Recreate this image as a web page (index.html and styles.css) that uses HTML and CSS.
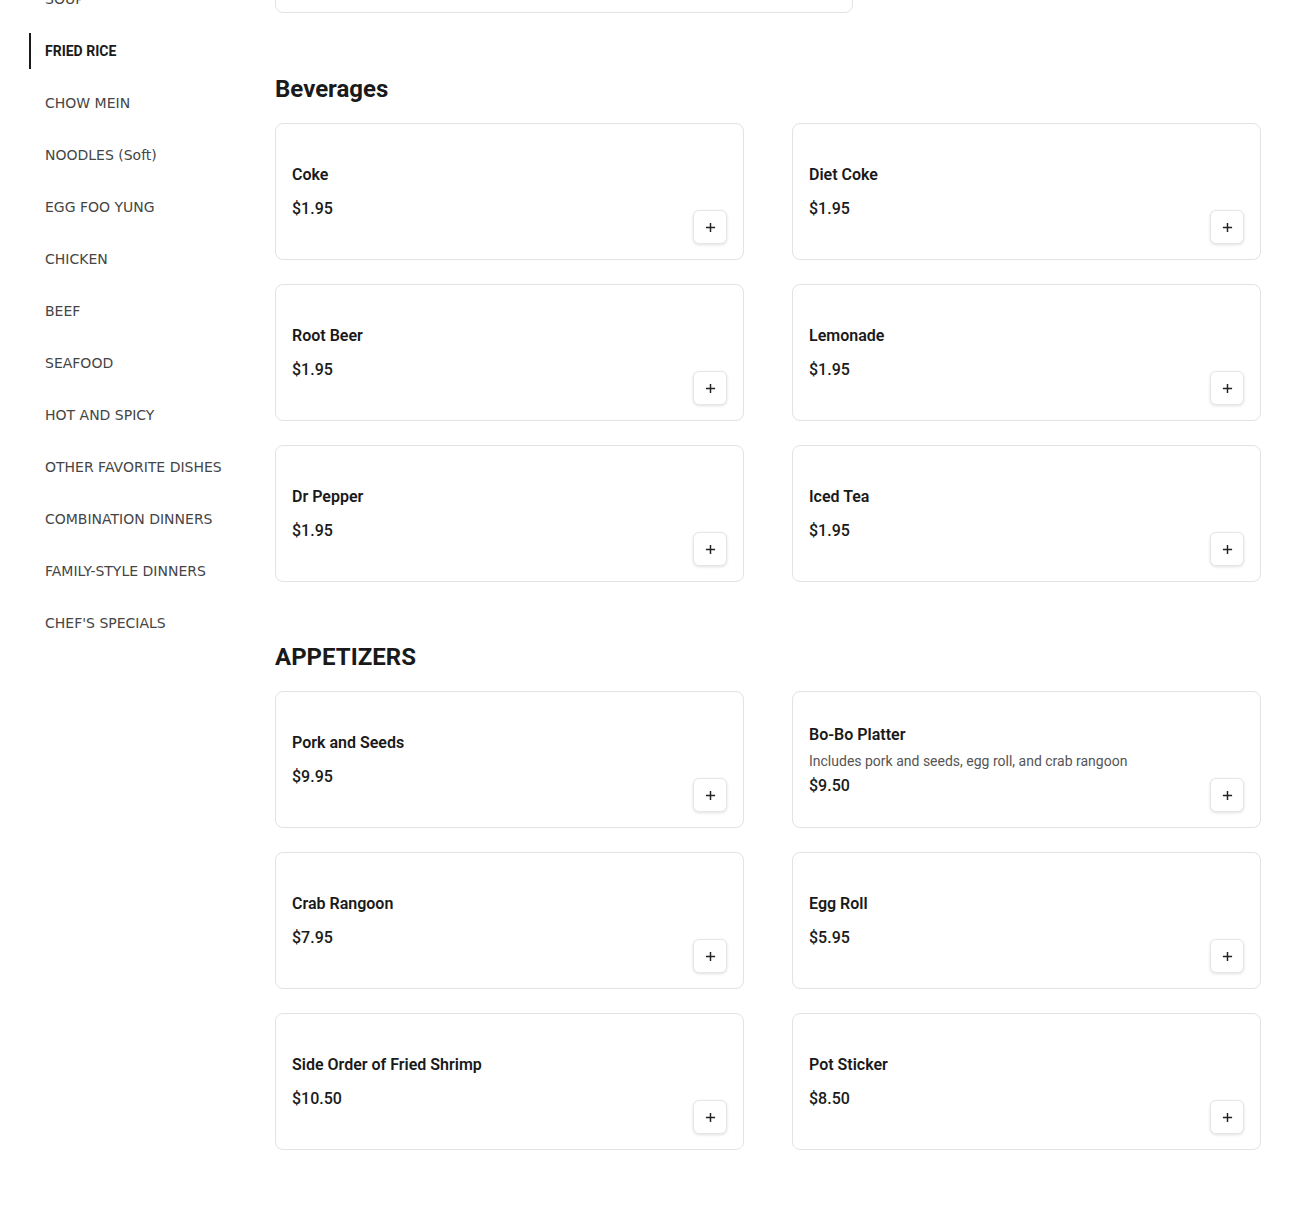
FILE: index.html
```html
<!DOCTYPE html>
<html lang="en">
<head>
<meta charset="utf-8">
<title>Menu</title>
<link rel="stylesheet" href="styles.css">
</head>
<body>
<div class="page">
  <aside class="sidebar">
    <nav class="nav">
      <a class="nav-item">SOUP</a>
      <a class="nav-item active">FRIED RICE</a>
      <a class="nav-item">CHOW MEIN</a>
      <a class="nav-item">NOODLES (Soft)</a>
      <a class="nav-item">EGG FOO YUNG</a>
      <a class="nav-item">CHICKEN</a>
      <a class="nav-item">BEEF</a>
      <a class="nav-item">SEAFOOD</a>
      <a class="nav-item">HOT AND SPICY</a>
      <a class="nav-item">OTHER FAVORITE DISHES</a>
      <a class="nav-item">COMBINATION DINNERS</a>
      <a class="nav-item">FAMILY-STYLE DINNERS</a>
      <a class="nav-item">CHEF'S SPECIALS</a>
    </nav>
  </aside>
  <main class="main">
    <div class="prev-card"></div>

    <section class="section">
      <h2 class="section-title">Beverages</h2>
      <div class="grid">
        <div class="card"><div class="card-body"><div class="item-name">Coke</div><div class="item-price">$1.95</div></div><button class="add-btn"><svg viewBox="0 0 12 12" width="11" height="11"><path d="M6 1v10M1 6h10" stroke="#222" stroke-width="1.6" fill="none"/></svg></button></div>
        <div class="card"><div class="card-body"><div class="item-name">Diet Coke</div><div class="item-price">$1.95</div></div><button class="add-btn"><svg viewBox="0 0 12 12" width="11" height="11"><path d="M6 1v10M1 6h10" stroke="#222" stroke-width="1.6" fill="none"/></svg></button></div>
        <div class="card"><div class="card-body"><div class="item-name">Root Beer</div><div class="item-price">$1.95</div></div><button class="add-btn"><svg viewBox="0 0 12 12" width="11" height="11"><path d="M6 1v10M1 6h10" stroke="#222" stroke-width="1.6" fill="none"/></svg></button></div>
        <div class="card"><div class="card-body"><div class="item-name">Lemonade</div><div class="item-price">$1.95</div></div><button class="add-btn"><svg viewBox="0 0 12 12" width="11" height="11"><path d="M6 1v10M1 6h10" stroke="#222" stroke-width="1.6" fill="none"/></svg></button></div>
        <div class="card"><div class="card-body"><div class="item-name">Dr Pepper</div><div class="item-price">$1.95</div></div><button class="add-btn"><svg viewBox="0 0 12 12" width="11" height="11"><path d="M6 1v10M1 6h10" stroke="#222" stroke-width="1.6" fill="none"/></svg></button></div>
        <div class="card"><div class="card-body"><div class="item-name">Iced Tea</div><div class="item-price">$1.95</div></div><button class="add-btn"><svg viewBox="0 0 12 12" width="11" height="11"><path d="M6 1v10M1 6h10" stroke="#222" stroke-width="1.6" fill="none"/></svg></button></div>
      </div>
    </section>

    <section class="section">
      <h2 class="section-title">APPETIZERS</h2>
      <div class="grid">
        <div class="card"><div class="card-body"><div class="item-name">Pork and Seeds</div><div class="item-price">$9.95</div></div><button class="add-btn"><svg viewBox="0 0 12 12" width="11" height="11"><path d="M6 1v10M1 6h10" stroke="#222" stroke-width="1.6" fill="none"/></svg></button></div>
        <div class="card"><div class="card-body with-desc"><div class="item-name">Bo-Bo Platter</div><div class="item-desc">Includes pork and seeds, egg roll, and crab rangoon</div><div class="item-price tight">$9.50</div></div><button class="add-btn"><svg viewBox="0 0 12 12" width="11" height="11"><path d="M6 1v10M1 6h10" stroke="#222" stroke-width="1.6" fill="none"/></svg></button></div>
        <div class="card"><div class="card-body"><div class="item-name">Crab Rangoon</div><div class="item-price">$7.95</div></div><button class="add-btn"><svg viewBox="0 0 12 12" width="11" height="11"><path d="M6 1v10M1 6h10" stroke="#222" stroke-width="1.6" fill="none"/></svg></button></div>
        <div class="card"><div class="card-body"><div class="item-name">Egg Roll</div><div class="item-price">$5.95</div></div><button class="add-btn"><svg viewBox="0 0 12 12" width="11" height="11"><path d="M6 1v10M1 6h10" stroke="#222" stroke-width="1.6" fill="none"/></svg></button></div>
        <div class="card"><div class="card-body"><div class="item-name">Side Order of Fried Shrimp</div><div class="item-price">$10.50</div></div><button class="add-btn"><svg viewBox="0 0 12 12" width="11" height="11"><path d="M6 1v10M1 6h10" stroke="#222" stroke-width="1.6" fill="none"/></svg></button></div>
        <div class="card"><div class="card-body"><div class="item-name">Pot Sticker</div><div class="item-price">$8.50</div></div><button class="add-btn"><svg viewBox="0 0 12 12" width="11" height="11"><path d="M6 1v10M1 6h10" stroke="#222" stroke-width="1.6" fill="none"/></svg></button></div>
      </div>
    </section>
  </main>
</div>
</body>
</html>
```

FILE: styles.css
```css
* { box-sizing: border-box; }
html, body { margin: 0; padding: 0; background: #fff; }
body {
  font-family: Roboto, "Liberation Sans", sans-serif;
  color: #1a1a1a;
  overflow: hidden;
}
.page {
  display: flex;
  padding: 0 29px;
  margin-top: -124px;
}
.sidebar {
  width: 246px;
  flex: none;
  padding-top: 105px;
}
.nav {
  display: flex;
  flex-direction: column;
  gap: 16px;
}
.nav-item {
  display: flex;
  align-items: center;
  height: 36px;
  padding-left: 14px;
  border-left: 2px solid transparent;
  font-family: "DejaVu Sans", sans-serif;
  font-size: 14px;
  color: #454545;
  text-decoration: none;
}
.nav-item.active {
  border-left-color: #1a1a1a;
  font-family: Roboto, sans-serif;
  font-weight: 700;
  color: #1a1a1a;
}
.main {
  flex: 1;
  min-width: 0;
}
.prev-card {
  width: 578px;
  height: 137px;
  border: 1px solid #e3e3e3;
  border-radius: 8px;
}
.section { margin-top: 60px; }
.section + .section { margin-top: 59px; }
.section-title {
  margin: 0 0 18px;
  font-size: 24px;
  line-height: 32px;
  font-weight: 700;
  color: #1a1a1a;
}
.grid {
  display: grid;
  grid-template-columns: 1fr 1fr;
  column-gap: 48px;
  row-gap: 24px;
}
.card {
  height: 137px;
  border: 1px solid #e3e3e3;
  border-radius: 8px;
  padding: 0 16px 15px 16px;
  display: flex;
  align-items: center;
  justify-content: space-between;
}
.card-body {
  display: flex;
  flex-direction: column;
  margin-top: 15px;
}
.card-body.with-desc { margin-top: 17px; }
.item-name {
  font-size: 16px;
  line-height: 24px;
  font-weight: 600;
  color: #1a1a1a;
}
.item-desc {
  margin-top: 4px;
  font-size: 14px;
  line-height: 20px;
  color: #555;
}
.item-price {
  margin-top: 10px;
  font-size: 16px;
  line-height: 24px;
  font-weight: 500;
  color: #1a1a1a;
}
.item-price.tight { margin-top: 3px; }
.add-btn {
  align-self: flex-end;
  width: 34px;
  height: 34px;
  padding: 0;
  border: 1px solid #e6e6e6;
  border-radius: 6px;
  background: #fff;
  box-shadow: 0 1px 3px rgba(0,0,0,0.12);
  display: flex;
  align-items: center;
  justify-content: center;
  cursor: pointer;
}
```
